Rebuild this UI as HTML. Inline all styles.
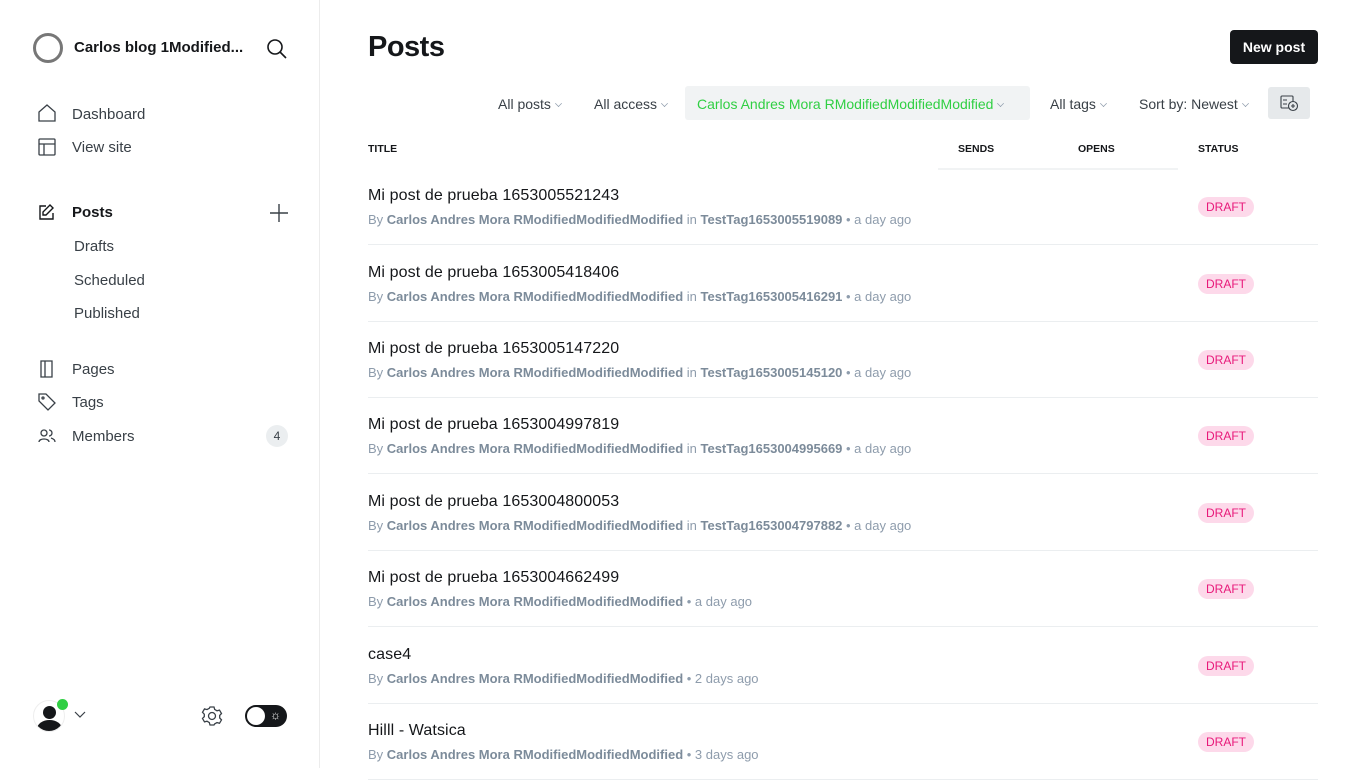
<!DOCTYPE html><html><head><style>
*{margin:0;padding:0;box-sizing:border-box}
body{width:1366px;height:768px;overflow:hidden;font-family:"Liberation Sans",sans-serif;background:#fff;color:#15171a;position:relative}
.side{position:absolute;left:0;top:0;width:320px;height:768px;border-right:1px solid #ececec}
.a{position:absolute}
.nav{position:absolute;left:72px;font-size:15px;color:#394047}
.ic{position:absolute;left:38px}
.row{position:absolute;left:368px;width:950px;height:77px;border-bottom:1px solid #ebeef0}
.row .t{position:absolute;top:19px;font-size:16px;letter-spacing:0.1px;color:#15171a}
.row .m{position:absolute;top:44px;font-size:13px;color:#8e9cac}
.row .m b{color:#7c8b9a;font-weight:bold}
.row .d{position:absolute;left:830px;top:29px;width:56px;height:20px;border-radius:10px;background:#fdd9ea;color:#e8197a;font-size:12px;text-align:center;line-height:20px}
.f{position:absolute;top:96px;font-size:14px;color:#394047}
.cv{display:inline-block;width:7px;height:7px;margin-left:4px;vertical-align:2px;border-right:1px solid #8e9cac;border-bottom:1px solid #8e9cac;transform:scale(.7) rotate(45deg)}
.h{position:absolute;top:143px;font-size:10.5px;font-weight:bold;color:#15171a}
</style></head><body>
<div class="side">
<svg class="a" style="left:32px;top:32px" width="32" height="32"><circle cx="16" cy="16" r="13.5" fill="none" stroke="#777" stroke-width="3"/></svg>
<div class="a" style="left:74px;top:39px;font-size:15px;font-weight:bold">Carlos blog 1Modified...</div>
<svg class="a" style="left:266px;top:38px" width="22" height="22" fill="none" stroke="#15171a" stroke-width="1.6"><circle cx="9" cy="9" r="7"/><path d="M14 14l6 6"/></svg>
<svg class="ic" style="top:104px" width="18" height="18" fill="none" stroke="#394047" stroke-width="1.3"><path d="M1 8L9 1l8 7v9H1z"/></svg>
<div class="nav" style="top:106px">Dashboard</div>
<svg class="ic" style="top:138px" width="18" height="18" fill="none" stroke="#394047" stroke-width="1.3"><rect x="1" y="1" width="16" height="16" rx="1"/><path d="M1 6h16M6 6v11"/></svg>
<div class="nav" style="top:139px">View site</div>
<svg class="ic" style="top:203px" width="18" height="18" fill="none" stroke="#15171a" stroke-width="1.4"><path d="M8 3H2v13h13v-6M12 2l3 3-7 7H5V9z"/></svg>
<div class="nav" style="top:204px;font-weight:bold;color:#15171a">Posts</div>
<svg class="a" style="left:269px;top:203px" width="20" height="20" stroke="#394047" stroke-width="1.4"><path d="M10 1v18M1 10h18"/></svg>
<div class="nav" style="top:238px;left:74px">Drafts</div>
<div class="nav" style="top:272px;left:74px">Scheduled</div>
<div class="nav" style="top:305px;left:74px">Published</div>
<svg class="ic" style="top:360px" width="18" height="18" fill="none" stroke="#394047" stroke-width="1.3"><path d="M3 1h11v16H3zM7 1v16"/></svg>
<div class="nav" style="top:361px">Pages</div>
<svg class="ic" style="top:393px" width="18" height="18" fill="none" stroke="#394047" stroke-width="1.3"><path d="M1 1h7l9 9-7 7-9-9z"/><circle cx="5" cy="5" r="1"/></svg>
<div class="nav" style="top:394px">Tags</div>
<svg class="ic" style="top:428px" width="18" height="16" fill="none" stroke="#394047" stroke-width="1.3"><circle cx="6" cy="5" r="3"/><path d="M1 14c0-4 10-4 10 0M11 2a3 3 0 010 6M13 10c3 1 4 2 4 4"/></svg>
<div class="nav" style="top:428px">Members</div>
<div class="a" style="left:266px;top:425px;width:22px;height:22px;border-radius:11px;background:#ebeef0;font-size:12px;text-align:center;line-height:22px;color:#394047">4</div>
<div class="a" style="left:33px;top:700px;width:32px;height:32px;border-radius:16px;border:1px solid #eee;overflow:hidden"><div class="a" style="left:9px;top:5px;width:13px;height:13px;border-radius:50%;background:#15171a"></div><div class="a" style="left:3px;top:19px;width:25px;height:18px;border-radius:50%;background:#15171a"></div></div>
<div class="a" style="left:57px;top:699px;width:11px;height:11px;border-radius:50%;background:#30cf43"></div>
<svg class="a" style="left:74px;top:711px" width="12" height="8" fill="none" stroke="#394047" stroke-width="1.2"><path d="M1 1l5 5 5-5"/></svg>
<svg class="a" style="left:201px;top:705px" width="22" height="22" fill="none" stroke="#394047" stroke-width="1.3"><circle cx="11" cy="11" r="3.5"/><path d="M9 2h4l.7 2.5 2.3 1.3 2.5-.7 2 3.4-1.8 1.9v2.6l1.8 1.9-2 3.4-2.5-.7-2.3 1.3L13 20H9l-.7-2.5-2.3-1.3-2.5.7-2-3.4 1.8-1.9V9.2L1.5 7.3l2-3.4 2.5.7 2.3-1.3z"/></svg>
<div class="a" style="left:245px;top:705px;width:42px;height:22px;border-radius:11px;background:#15171a"><div class="a" style="left:2px;top:2px;width:18px;height:18px;border-radius:50%;background:#fff"></div><div class="a" style="left:25px;top:3px;color:#fff;font-size:12px">☼</div></div>
</div>
<div class="a" style="left:368px;top:31px;font-size:29px;font-weight:bold;letter-spacing:-0.5px">Posts</div>
<div class="a" style="left:1230px;top:30px;width:88px;height:34px;border-radius:4px;background:#15171a;color:#fff;font-size:14px;font-weight:bold;text-align:center;line-height:34px">New post</div>
<div class="f" style="left:498px">All posts<span class="cv"></span></div>
<div class="f" style="left:594px">All access<span class="cv"></span></div>
<div class="a" style="left:685px;top:86px;width:345px;height:34px;background:#f1f3f4;border-radius:3px"></div>
<div class="f" style="left:697px;color:#30cf43">Carlos Andres Mora RModifiedModifiedModified<span class="cv"></span></div>
<div class="f" style="left:1050px">All tags<span class="cv"></span></div>
<div class="f" style="left:1139px">Sort by: Newest<span class="cv"></span></div>
<div class="a" style="left:1268px;top:87px;width:42px;height:32px;background:#e6e9eb;border-radius:3px"></div>
<svg class="a" style="left:1280px;top:95px" width="19" height="17" fill="none" stroke="#394047" stroke-width="1.1"><rect x="1" y="1" width="12" height="12" rx="1"/><path d="M3 5h4M3 9h4"/><circle cx="13" cy="11" r="4.5" fill="#e6e9eb"/><path d="M13 9v4M11 11h4"/></svg>
<div class="h" style="left:368px">TITLE</div>
<div class="h" style="left:958px">SENDS</div>
<div class="h" style="left:1078px">OPENS</div>
<div class="h" style="left:1198px">STATUS</div>
<div class="a" style="left:938px;top:168px;width:240px;height:2px;background:#f1f3f4"></div>
<div class="row" style="top:168px"><div class="t">Mi post de prueba 1653005521243</div><div class="m">By <b>Carlos Andres Mora RModifiedModifiedModified</b> in <b>TestTag1653005519089</b> • a day ago</div><div class="d">DRAFT</div></div>
<div class="row" style="top:245px"><div class="t">Mi post de prueba 1653005418406</div><div class="m">By <b>Carlos Andres Mora RModifiedModifiedModified</b> in <b>TestTag1653005416291</b> • a day ago</div><div class="d">DRAFT</div></div>
<div class="row" style="top:321px"><div class="t">Mi post de prueba 1653005147220</div><div class="m">By <b>Carlos Andres Mora RModifiedModifiedModified</b> in <b>TestTag1653005145120</b> • a day ago</div><div class="d">DRAFT</div></div>
<div class="row" style="top:397px"><div class="t">Mi post de prueba 1653004997819</div><div class="m">By <b>Carlos Andres Mora RModifiedModifiedModified</b> in <b>TestTag1653004995669</b> • a day ago</div><div class="d">DRAFT</div></div>
<div class="row" style="top:474px"><div class="t">Mi post de prueba 1653004800053</div><div class="m">By <b>Carlos Andres Mora RModifiedModifiedModified</b> in <b>TestTag1653004797882</b> • a day ago</div><div class="d">DRAFT</div></div>
<div class="row" style="top:550px"><div class="t">Mi post de prueba 1653004662499</div><div class="m">By <b>Carlos Andres Mora RModifiedModifiedModified</b> • a day ago</div><div class="d">DRAFT</div></div>
<div class="row" style="top:627px"><div class="t">case4</div><div class="m">By <b>Carlos Andres Mora RModifiedModifiedModified</b> • 2 days ago</div><div class="d">DRAFT</div></div>
<div class="row" style="top:703px"><div class="t">Hilll - Watsica</div><div class="m">By <b>Carlos Andres Mora RModifiedModifiedModified</b> • 3 days ago</div><div class="d">DRAFT</div></div>
</body></html>
